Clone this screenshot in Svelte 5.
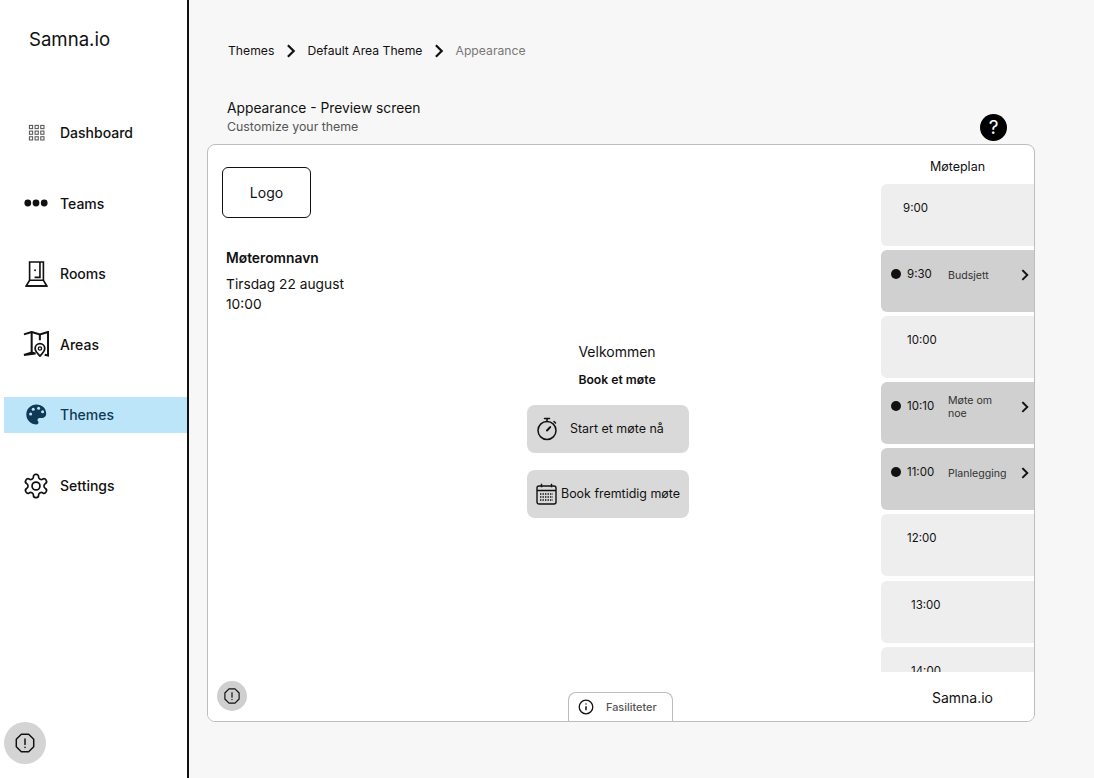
<script>
	const nav = ['Dashboard', 'Teams', 'Rooms', 'Areas', 'Themes', 'Settings'];

	const slots = [
		{ time: '9:00', pad: 22 },
		{ time: '9:30', title: 'Budsjett', busy: true },
		{ time: '10:00', pad: 26 },
		{ time: '10:10', title: 'Møte om noe', busy: true },
		{ time: '11:00', title: 'Planlegging', busy: true },
		{ time: '12:00', pad: 26 },
		{ time: '13:00', pad: 30 },
		{ time: '14:00', pad: 30 }
	];
</script>

{#snippet octagon(size)}
	<svg width={size} height={size} viewBox="0 0 24 24" fill="none" stroke="#111" stroke-width="1.6" stroke-linejoin="round" stroke-linecap="round">
		<polygon points="8,2.5 16,2.5 21.5,8 21.5,16 16,21.5 8,21.5 2.5,16 2.5,8" />
		<path d="M12 7.5v6M12 16.6v.2" />
	</svg>
{/snippet}

{#snippet chevron(size)}
	<svg width={size} height={size} viewBox="0 0 12 12" fill="none" stroke="#111" stroke-width="1.9" stroke-linecap="square">
		<path d="M4 1.8 8.3 6 4 10.2" />
	</svg>
{/snippet}

<div class="page">
	<aside class="sidebar">
		<div class="brand">Samna.io</div>
		<nav>
			{#each nav as item}
				<div class="nav-item" class:active={item === 'Themes'}>
					<span class="nav-icon">
						{#if item === 'Dashboard'}
							<svg width="17" height="17" viewBox="0 0 18 18" fill="none" stroke="#555" stroke-width="1.1">
								{#each [1, 7, 13] as y}
									{#each [1, 7, 13] as x}
										<rect x={x + 0.5} y={y + 0.5} width="3.4" height="3.4" />
									{/each}
								{/each}
							</svg>
						{:else if item === 'Teams'}
							<svg width="26" height="10" viewBox="0 0 26 10" fill="#111">
								<circle cx="4.8" cy="5" r="3.4" />
								<circle cx="13" cy="5" r="3.4" />
								<circle cx="21.2" cy="5" r="3.4" />
							</svg>
						{:else if item === 'Rooms'}
							<svg width="23" height="26" viewBox="0 0 24 27" fill="none" stroke="#111" stroke-width="1.7">
								<path d="M4.8 20V1h14.4v19" />
								<path d="M15.6 1v16H10" />
								<path d="M4.8 20h14.4l3.6 6H1.2z" />
								<path d="M1 26h22" stroke-width="1.8" />
								<circle cx="10.5" cy="9.5" r="1" fill="#111" stroke="none" />
							</svg>
						{:else if item === 'Areas'}
							<svg width="26" height="26" viewBox="0 0 27 27" fill="none" stroke="#111" stroke-width="2.1" stroke-linejoin="miter">
								<path d="M1 3.5 9 1l8.5 2.5L26 1v24.5l-3.5-.8M13 23.3l-4-1-8 2.5z" />
								<path d="M9 1v21.3M17.5 3.5v6" />
								<path d="M17.6 26c-3-3-5-5.2-5-7.8a5 5 0 0 1 10 0c0 2.6-2 4.8-5 7.8z" fill="#fff" stroke-width="1.8" />
								<circle cx="17.6" cy="18.2" r="1.7" fill="none" stroke-width="1.4" />
							</svg>
						{:else if item === 'Themes'}
							<svg width="21" height="21" viewBox="0 0 21 21">
								<path fill="#0f3a55" d="M10.5.5C4.8.5.3 4.9.3 10.5s4.5 10 10.2 10c1.3 0 2-.9 2-1.9 0-.6-.2-1-.5-1.4-.4-.4-.5-.8-.5-1.3 0-1.1.9-1.9 2-1.9h2.3c2.6 0 4.4-1.9 4.4-4.3C20.2 4.2 15.8.5 10.5.5z" />
								<g fill="#bde5fa">
									<circle cx="4.6" cy="10" r="1.5" />
									<circle cx="7.2" cy="5.2" r="1.5" />
									<circle cx="12.6" cy="4.2" r="1.5" />
									<circle cx="16.6" cy="7.8" r="1.5" />
								</g>
							</svg>
						{:else}
							<svg width="28" height="28" viewBox="0 0 24 24" fill="none" stroke="#111" stroke-width="1.45" stroke-linejoin="round">
								<path d="M12.22 2h-.44a2 2 0 0 0-2 2v.18a2 2 0 0 1-1 1.73l-.43.25a2 2 0 0 1-2 0l-.15-.08a2 2 0 0 0-2.73.73l-.22.38a2 2 0 0 0 .73 2.73l.15.1a2 2 0 0 1 1 1.72v.51a2 2 0 0 1-1 1.74l-.15.09a2 2 0 0 0-.73 2.73l.22.38a2 2 0 0 0 2.73.73l.15-.08a2 2 0 0 1 2 0l.43.25a2 2 0 0 1 1 1.73V20a2 2 0 0 0 2 2h.44a2 2 0 0 0 2-2v-.18a2 2 0 0 1 1-1.73l.43-.25a2 2 0 0 1 2 0l.15.08a2 2 0 0 0 2.73-.73l.22-.39a2 2 0 0 0-.73-2.73l-.15-.08a2 2 0 0 1-1-1.74v-.5a2 2 0 0 1 1-1.74l.15-.09a2 2 0 0 0 .73-2.73l-.22-.38a2 2 0 0 0-2.73-.73l-.15.08a2 2 0 0 1-2 0l-.43-.25a2 2 0 0 1-1-1.73V4a2 2 0 0 0-2-2z" />
								<circle cx="12" cy="12" r="3.4" />
							</svg>
						{/if}
					</span>
					<span>{item}</span>
				</div>
			{/each}
		</nav>
		<button class="help-round">{@render octagon(22)}</button>
	</aside>

	<main>
		<div class="crumbs">
			<span>Themes</span>
			{@render chevron(14)}
			<span>Default Area Theme</span>
			{@render chevron(14)}
			<span class="current">Appearance</span>
		</div>

		<div class="heading">
			<div class="heading-text">
				<h1>Appearance - Preview screen</h1>
				<p>Customize your theme</p>
			</div>
			<div class="question">?</div>
		</div>

		<section class="preview">
			<div class="screen">
				<div class="left">
					<div class="logo">Logo</div>
					<div class="room">
						<strong>Møteromnavn</strong>
						<span>Tirsdag 22 august</span>
						<span>10:00</span>
					</div>
					<div class="welcome">
						<div class="hello">Velkommen</div>
						<div class="book-title">Book et møte</div>
						<button class="action start">
							<svg width="22" height="24" viewBox="0 0 22 24" fill="none" stroke="#111" stroke-width="1.5" stroke-linecap="round">
								<circle cx="11" cy="13.5" r="9" />
								<path d="M8.5 1.5h5M11 1.5v3M18 4.5l1.5 1.5" />
								<path d="M11 13.5l3.2-3.4" stroke-width="2" />
							</svg>
							<span>Start et møte nå</span>
						</button>
						<button class="action later">
							<svg width="21" height="22" viewBox="0 0 21 22" fill="none" stroke="#111" stroke-width="1.4">
								<rect x="1" y="3" width="19" height="18" rx="2" />
								<path d="M1 7.5h19M5.5 .8v3.5M15.5 .8v3.5" />
								<path d="M4 11h13M4 14h13M4 17h13" stroke-width="1.6" stroke-dasharray="1.4 1.1" />
							</svg>
							<span>Book fremtidig møte</span>
						</button>
					</div>
				</div>

				<div class="schedule">
					<div class="schedule-title">Møteplan</div>
					<div class="slots">
						{#each slots as slot}
							<div class="slot" class:busy={slot.busy}>
								{#if slot.busy}
									<span class="dot"></span>
									<span class="time">{slot.time}</span>
									<span class="title">{slot.title}</span>
									<span class="arrow">{@render chevron(12)}</span>
								{:else}
									<span class="time" style="padding-left: {slot.pad}px">{slot.time}</span>
								{/if}
							</div>
						{/each}
					</div>
				</div>
			</div>

			<footer>
				<button class="help-small">{@render octagon(18)}</button>
				<div class="tab">
					<svg width="16" height="16" viewBox="0 0 16 16" fill="none" stroke="#111" stroke-width="1.3">
						<circle cx="8" cy="8" r="6.8" />
						<path d="M8 7.2v4M8 4.4v1.2" stroke-width="1.5" />
					</svg>
					<span>Fasiliteter</span>
				</div>
				<div class="footer-brand">Samna.io</div>
			</footer>
		</section>
	</main>
</div>

<style>
	:global(body) {
		margin: 0;
		font-family: Inter, 'Liberation Sans', sans-serif;
		color: #111;
	}

	button {
		font: inherit;
		color: inherit;
		border: none;
		padding: 0;
	}

	.page {
		display: flex;
		width: 1094px;
		height: 778px;
		overflow: hidden;
	}

	.sidebar {
		position: relative;
		width: 187px;
		flex: none;
		padding-left: 4px;
		box-sizing: border-box;
		background: #fff;
	}

	.brand {
		padding: 27px 0 0 25px;
		height: 88px;
		font-size: 18.6px;
		line-height: 24px;
		box-sizing: border-box;
		margin-bottom: 26.6px;
	}

	nav {
		display: flex;
		flex-direction: column;
		gap: 34.6px;
	}

	.nav-item {
		display: flex;
		align-items: center;
		height: 36px;
		font-size: 14px;
		font-weight: 500;
	}

	.nav-item.active {
		background: #bde5fa;
		color: #0f3a55;
	}

	.nav-icon {
		display: flex;
		align-items: center;
		justify-content: center;
		width: 56px;
		flex: none;
		padding-left: 8px;
		box-sizing: border-box;
	}

	.help-round {
		position: absolute;
		left: 4px;
		bottom: 14px;
		width: 42px;
		height: 42px;
		border-radius: 50%;
		background: #d4d4d4;
		display: flex;
		align-items: center;
		justify-content: center;
	}

	main {
		flex: 1;
		background: #f7f7f7;
		border-left: 2px solid #111;
		padding: 0 59px 0 18px;
		box-sizing: border-box;
		min-width: 0;
	}

	.crumbs {
		display: flex;
		align-items: center;
		gap: 9.5px;
		padding: 42px 0 0 21px;
		height: 59px;
		box-sizing: border-box;
		font-size: 12.2px;
		font-weight: 400;
		line-height: 16px;
		margin-bottom: 40px;
	}

	.crumbs .current {
		color: #777;
	}

	.heading {
		display: flex;
		justify-content: space-between;
		align-items: flex-end;
		padding: 0 28px 0 20px;
		height: 45px;
	}

	.heading-text {
		padding-bottom: 9px;
	}

	h1 {
		margin: 0;
		font-size: 13.8px;
		line-height: 18px;
		font-weight: 400;
	}

	p {
		margin: 2px 0 0;
		font-size: 12.35px;
		line-height: 16px;
		color: #555;
	}

	.question {
		width: 27px;
		height: 27px;
		border-radius: 50%;
		background: #000;
		color: #fff;
		font-size: 19px;
		font-weight: 400;
		line-height: 27px;
		text-align: center;
		margin-bottom: 3px;
	}

	.preview {
		display: flex;
		flex-direction: column;
		height: 578px;
		box-sizing: border-box;
		border: 1px solid #bdbdbd;
		border-radius: 8px;
		background: #fff;
		overflow: hidden;
	}

	.screen {
		display: flex;
		flex: 1;
		min-height: 0;
	}

	.left {
		flex: 1;
		padding: 22px 0 0 14px;
	}

	.logo {
		display: flex;
		align-items: center;
		justify-content: center;
		width: 89px;
		height: 51px;
		padding-bottom: 1px;
		box-sizing: border-box;
		border: 1px solid #111;
		border-radius: 6px;
		font-size: 14px;
	}

	.room {
		display: flex;
		flex-direction: column;
		margin: 30px 0 0 4px;
		font-size: 13.75px;
		line-height: 20px;
	}

	.room strong {
		font-size: 13.8px;
		font-weight: 600;
		margin-bottom: 6px;
	}

	.welcome {
		width: 180px;
		margin: 28.5px 0 0 305px;
		text-align: center;
	}

	.hello {
		font-size: 14px;
		line-height: 18px;
	}

	.book-title {
		margin: 11px 0 17px;
		font-size: 12.2px;
		line-height: 16px;
		font-weight: 600;
	}

	.action {
		display: flex;
		align-items: center;
		width: 162px;
		height: 48px;
		border-radius: 8px;
		background: #d9d9d9;
		font-size: 12.45px;
		font-weight: 400;
	}

	.start {
		gap: 12px;
		padding-left: 9px;
		margin-bottom: 17px;
	}

	.later {
		gap: 4px;
		padding-left: 9px;
	}

	.schedule {
		width: 153px;
		flex: none;
		display: flex;
		flex-direction: column;
	}

	.schedule-title {
		height: 39px;
		flex: none;
		box-sizing: border-box;
		padding-top: 14px;
		font-size: 12.5px;
		line-height: 16px;
		font-weight: 400;
		text-align: center;
	}

	.slots {
		flex: 1;
		min-height: 0;
		overflow: hidden;
		display: flex;
		flex-direction: column;
		gap: 4.1px;
	}

	.slot {
		position: relative;
		display: flex;
		align-items: flex-start;
		flex: none;
		height: 62px;
		border-radius: 6px 0 0 6px;
		background: #eeeeee;
		font-size: 11.5px;
		line-height: 14px;
	}

	.slot.busy {
		background: #d0d0d0;
	}

	.time {
		padding-top: 17px;
	}

	.dot {
		width: 10px;
		height: 10px;
		margin: 19px 6px 0 10px;
		flex: none;
		border-radius: 50%;
		background: #111;
	}

	.busy .time {
		width: 41px;
		flex: none;
	}

	.title {
		display: flex;
		align-items: center;
		width: 64px;
		height: 50px;
		flex: none;
		font-size: 10.6px;
		line-height: 13px;
		color: #333;
	}

	.arrow {
		position: absolute;
		right: 3px;
		top: 19px;
		display: flex;
	}

	footer {
		position: relative;
		display: flex;
		align-items: flex-end;
		height: 49px;
		flex: none;
		background: #fff;
	}

	.help-small {
		width: 30px;
		height: 30px;
		margin: 0 0 10px 9px;
		border-radius: 50%;
		background: #cfcfcf;
		display: flex;
		align-items: center;
		justify-content: center;
	}

	.tab {
		display: flex;
		align-items: center;
		gap: 12px;
		width: 105px;
		height: 29px;
		margin-left: 321px;
		padding: 0 0 0 9px;
		box-sizing: border-box;
		border: 1px solid #bdbdbd;
		border-bottom: 0;
		border-radius: 8px 8px 0 0;
		font-size: 10.9px;
		font-weight: 500;
		color: #555;
	}

	.footer-brand {
		margin: 0 0 14px auto;
		padding-right: 41px;
		font-size: 14px;
		line-height: 18px;
	}
</style>
